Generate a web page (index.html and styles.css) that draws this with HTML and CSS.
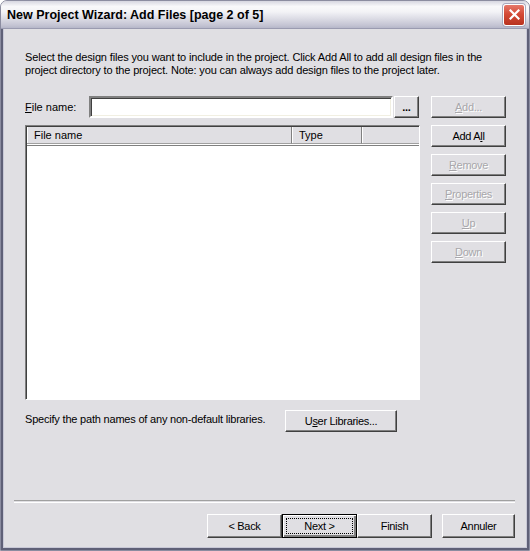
FILE: index.html
```html
<!DOCTYPE html>
<html lang="en">
<head>
    <meta charset="UTF-8">
    <title>New Project Wizard: Add Files</title>
    <link rel="stylesheet" href="styles.css">
</head>
<body>
    <div class="window">
        <!-- Title bar -->
        <div class="titlebar">
            <span class="title">New Project Wizard: Add Files [page 2 of 5]</span>
            <span class="close">
                <svg width="11" height="11" viewBox="0 0 11 11">
                    <path d="M1.5 1.5 L9.5 9.5 M9.5 1.5 L1.5 9.5" stroke="#fff" stroke-width="2.2" stroke-linecap="square"/>
                </svg>
            </span>
        </div>

        <div class="client">
            <p class="intro">Select the design files you want to include in the project. Click Add All to add all design files in the<br>project directory to the project. Note: you can always add design files to the project later.</p>

            <div class="main">
                <div class="left">
                    <div class="file-row">
                        <label class="file-label"><u>F</u>ile name:</label>
                        <div class="input"></div>
                        <button class="btn dots">...</button>
                    </div>

                    <div class="list">
                        <div class="list-head">
                            <div class="col col-name">File name</div>
                            <div class="col col-type">Type</div>
                            <div class="col col-rest"></div>
                        </div>
                    </div>

                    <div class="libs-row">
                        <span class="libs-text">Specify the path names of any non-default libraries.</span>
                        <button class="btn libs">U<u>s</u>er Libraries...</button>
                    </div>
                </div>

                <div class="side">
                    <button class="btn side-btn disabled"><u>A</u>dd...</button>
                    <button class="btn side-btn">Add A<u>l</u>l</button>
                    <button class="btn side-btn disabled"><u>R</u>emove</button>
                    <button class="btn side-btn disabled"><u>P</u>roperties</button>
                    <button class="btn side-btn disabled"><u>U</u>p</button>
                    <button class="btn side-btn disabled"><u>D</u>own</button>
                </div>
            </div>

            <div class="separator"></div>

            <div class="footer">
                <button class="btn foot-btn back">&lt; Back</button>
                <button class="btn foot-btn default"><span class="focus">Next &gt;</span></button>
                <button class="btn foot-btn">Finish</button>
                <button class="btn foot-btn cancel">Annuler</button>
            </div>
        </div>
    </div>
</body>
</html>
```

FILE: styles.css
```css
/* General Styles */

html, body {
    margin: 0;
    padding: 0;
}

body {
    width: 530px;
    height: 551px;
    overflow: hidden;
    background-color: #ffffff;
    font-family: "Liberation Sans", Arial, sans-serif;
    font-size: 11px;
    color: #000;
}

.window {
    width: 530px;
    height: 551px;
    box-sizing: border-box;
    display: flex;
    flex-direction: column;
    background-color: #e0dfe3;
    border-radius: 7px 7px 0 0;
    border: 1px solid #8b8ca0;
    overflow: hidden;
}

/* Title bar */

.titlebar {
    height: 27px;
    flex: none;
    display: flex;
    align-items: center;
    justify-content: space-between;
    padding: 0 4px 0 6px;
    background: linear-gradient(to bottom, #d6d6e0 0%, #f8f8fa 20%, #f3f3f6 40%, #dcdce5 65%, #c4c4d3 90%, #b6b7c9 100%);
    border-bottom: 1px solid #9a9bb0;
}

.title {
    font-family: "Liberation Sans", Arial, sans-serif;
    font-weight: bold;
    font-size: 12.5px;
    letter-spacing: 0;
    color: #000;
    padding-top: 1px;
}

.close {
    width: 20px;
    height: 20px;
    display: flex;
    align-items: center;
    justify-content: center;
    border: 1px solid #fff;
    border-radius: 3px;
    background: linear-gradient(to bottom, #e5786a 0%, #d44a36 45%, #b8321f 100%);
    box-shadow: 0 0 0 1px #a8a8bc;
}

/* Client area */

.client {
    flex: 1;
    display: flex;
    flex-direction: column;
    padding: 0 12px 0 3px;
    border-left: 2px solid #5f6077;
    border-right: 2px solid #5f6077;
    border-bottom: 2px solid #5f6077;
    box-shadow: inset 1px 0 #c8c8d6, inset -1px 0 #c8c8d6, inset 0 -1px #c8c8d6;
}

.intro {
    margin: 22px 0 0 19px;
    line-height: 13px;
    letter-spacing: -0.15px;
}

.main {
    display: flex;
    gap: 11px;
    margin: 19px 0 0 19px;
}

.left {
    width: 395px;
    display: flex;
    flex-direction: column;
}

.file-row {
    display: flex;
    align-items: center;
    height: 22px;
}

.file-label {
    width: 64px;
}

.input {
    width: 300px;
    height: 18px;
    background: #fff;
    border: 2px solid;
    border-color: #808080 #fff #fff #808080;
    box-shadow: inset 1px 1px #404040, inset -1px -1px #f1efe2;
    box-sizing: content-box;
}

/* Buttons */

.btn {
    font-family: "Liberation Sans", Arial, sans-serif;
    font-size: 11px;
    letter-spacing: -0.3px;
    color: #000;
    background-color: #e0dfe3;
    border: 1px solid;
    border-color: #fff #404040 #404040 #fff;
    box-shadow: inset -1px -1px #808080;
    padding: 0;
    margin: 0;
    height: 22px;
}

.btn u {
    text-decoration-thickness: 1px;
    text-underline-offset: 1px;
}

.btn.disabled {
    color: #a8a7ab;
    text-shadow: 1px 1px #fff;
}

.dots {
    width: 25px;
    margin-left: 1px;
    font-weight: bold;
}

.list {
    height: 275px;
    margin-top: 7px;
    background: #fff;
    border: 1px solid;
    border-color: #808080 #fff #fff #808080;
    box-shadow: inset 1px 1px #404040;
    padding: 1px 0 0 1px;
    box-sizing: border-box;
    width: 395px;
}

.list-head {
    display: flex;
    height: 18px;
    border-bottom: 1px solid #808080;
}

.col {
    height: 17px;
    line-height: 17px;
    padding-left: 7px;
    background: #e0dfe3;
    border-right: 1px solid #808080;
    box-shadow: inset 1px 0 #fff;
    box-sizing: border-box;
    border-bottom: 1px solid #a0a0a0;
}

.col-name {
    width: 265px;
}

.col-type {
    width: 70px;
}

.col-rest {
    flex: 1;
    border-right: none;
}

.libs-row {
    display: flex;
    align-items: flex-start;
    margin-top: 10px;
}

.libs-text {
    width: 260px;
    padding-top: 3px;
    letter-spacing: -0.2px;
}

.libs {
    width: 112px;
}

.side {
    display: flex;
    flex-direction: column;
    gap: 7px;
}

.side-btn {
    width: 75px;
}

/* Footer */

.separator {
    margin: 68px 0 0 8px;
    height: 1px;
    border-top: 1px solid #a0a0a0;
    border-bottom: 1px solid #fff;
}

.footer {
    display: flex;
    justify-content: flex-end;
    margin-top: 11px;
}

.foot-btn {
    width: 75px;
    height: 24px;
    font-weight: normal;
}

.foot-btn.back {
    width: 75px;
}

.foot-btn.default {
    width: 75px;
    border: 1px solid #000;
    box-shadow: inset 1px 1px #fff, inset -2px -2px #808080, inset -1px -1px #404040;
    padding: 3px;
}

.focus {
    display: flex;
    align-items: center;
    justify-content: center;
    height: 100%;
    border: 1px dotted #000;
    box-sizing: border-box;
}

.foot-btn.cancel {
    margin-left: 10px;
    width: 73px;
}
```
